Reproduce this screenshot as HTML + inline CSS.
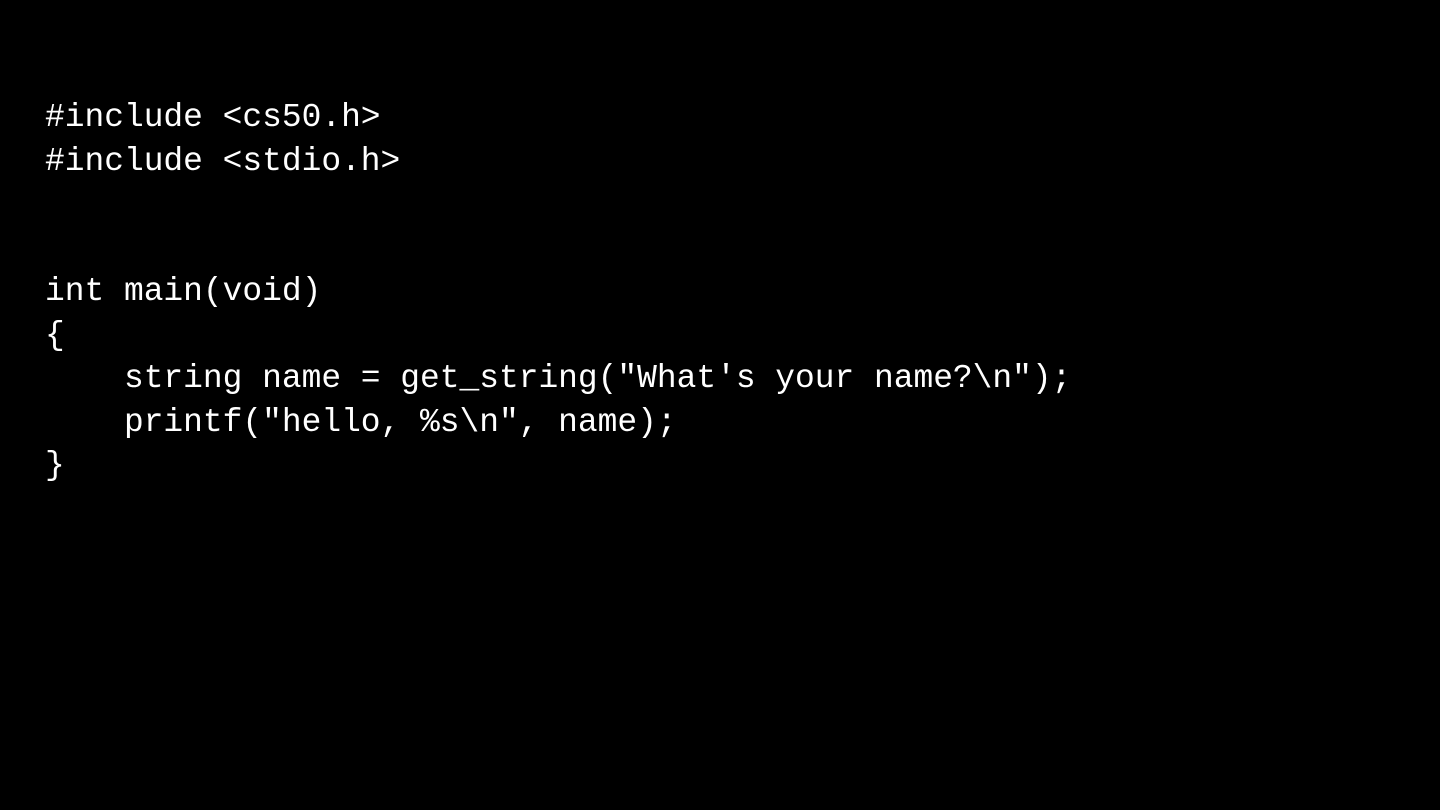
<!DOCTYPE html>
<html><head><meta charset="utf-8"><style>
html,body{margin:0;padding:0;background:#000;width:1440px;height:810px;overflow:hidden}
pre{position:absolute;left:45px;top:96px;margin:0;color:#fff;font-family:"Liberation Mono",monospace;font-size:32.9px;line-height:43.5px}
</style></head><body>
<pre>#include &lt;cs50.h&gt;
#include &lt;stdio.h&gt;


int main(void)
{
    string name = get_string("What's your name?\n");
    printf("hello, %s\n", name);
}</pre>
</body></html>
